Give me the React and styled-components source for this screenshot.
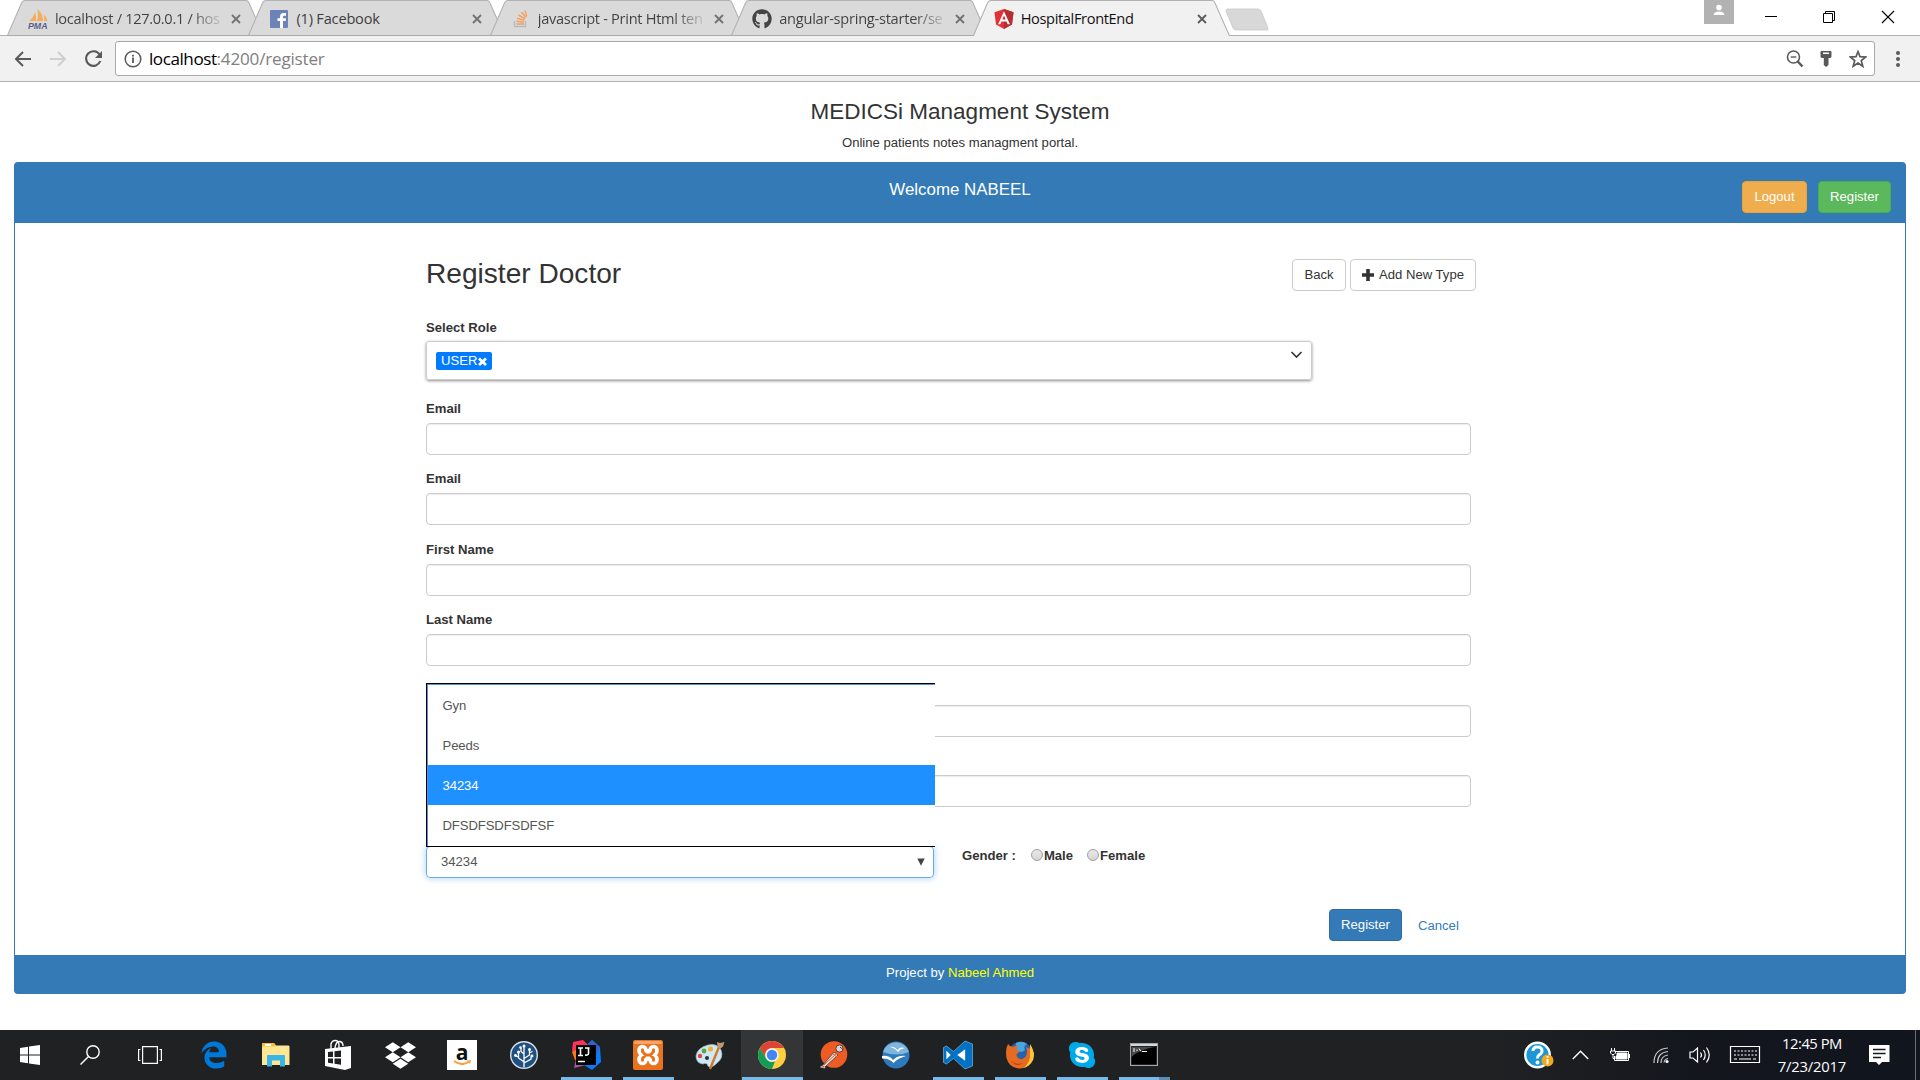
import React from "react";
import styled, { createGlobalStyle, css } from "styled-components";
import { FaGithub, FaDropbox, FaSkype } from "react-icons/fa";

const GlobalStyle = createGlobalStyle`
  * { box-sizing: border-box; }
  html, body { margin: 0; padding: 0; background: #fff; overflow: hidden; }
  body { font-family: "Liberation Sans", Arial, sans-serif; font-size: 13.125px; color: #333; }
`;

const Screen = styled.div`
  width: 1920px;
  height: 1080px;
  display: flex;
  flex-direction: column;
  overflow: hidden;
  background: #fff;
`;

/* ---------- browser chrome ---------- */
const uiFont = css`font-family: "Open Sans", "Noto Sans", sans-serif;`;

const TabStrip = styled.header`
  height: 36px;
  display: flex;
  padding-left: 7px;
  background: linear-gradient(#b1b1b1, #b1b1b1) 0 35px / 100% 1px no-repeat #fff;
  ${uiFont}
`;
const TabBox = styled.div`
  display: grid;
  width: 257px;
  height: 36px;
  flex: none;
  margin-right: -15.6px;
  z-index: ${(p) => (p.$active ? 2 : 1)};
  > * { grid-area: 1 / 1; }
`;
const TabContent = styled.div`
  display: flex;
  align-items: center;
  padding: 2px 20px 0 21px;
  height: 36px;
`;
const Favicon = styled.span`
  width: 20px;
  flex: none;
  display: flex;
  justify-content: center;
  margin-right: 7px;
`;
const TabTitle = styled.span`
  width: 168px;
  flex: none;
  margin: -2px 8px 0 0;
  white-space: nowrap;
  font-size: 14.6px;
  line-height: 20px;
  letter-spacing: ${(p) => p.$spacing || "-0.35px"};
  color: ${(p) => (p.$active ? "#111" : "#404040")};
  ${(p) => p.$fade && css`
    color: transparent;
    background: linear-gradient(90deg, #404040 136px, rgba(64, 64, 64, 0.12) 166px);
    background-clip: text;
    -webkit-background-clip: text;
  `}
`;
const NewTab = styled.svg`
  margin: 8px 0 0 11px;
`;
const WindowControls = styled.div`
  display: flex;
  margin-left: auto;
  padding-right: 25px;
`;
const UserBadge = styled.span`
  width: 30px;
  height: 24px;
  margin-right: 30px;
  background: #b2b2b2;
  display: flex;
  justify-content: center;
`;
const WinGlyph = styled.svg`
  width: 14px;
  height: 14px;
  margin: 10px ${(p) => p.$gap || "0"} 0 0;
`;
const Toolbar = styled.div`
  height: 46px;
  display: flex;
  align-items: center;
  padding: 0 13px 0 14px;
  background: #f1f1f1;
  border-bottom: 1px solid #b2b2b2;
  ${uiFont}
`;
const ToolIcon = styled.svg`
  width: ${(p) => p.$w || 18}px;
  height: 20px;
  flex: none;
  margin-right: ${(p) => p.$gap || 0}px;
`;
const AddressBar = styled.div`
  flex: 1;
  height: 35px;
  border: 1px solid #a9a9a9;
  border-radius: 3px;
  background: #fff;
  display: flex;
  align-items: center;
  padding: 0 7px 0 8px;
  margin-right: 14px;
`;
const Url = styled.span`
  flex: 1;
  font-size: 17.1px;
  line-height: 24px;
  letter-spacing: -0.2px;
  color: #808080;
  b { font-weight: 400; color: #000; letter-spacing: -0.45px; }
`;

/* ---------- page ---------- */
const Page = styled.main`
  flex: 1;
  padding: 18px 14px 0;
  display: flex;
  flex-direction: column;
`;
const SiteTitle = styled.h3`
  margin: 0;
  font-size: 22.5px;
  font-weight: 400;
  line-height: 24px;
  text-align: center;
`;
const Tagline = styled.p`
  margin: 9px 0 10px;
  line-height: 19px;
  text-align: center;
`;
const Panel = styled.section`
  border-radius: 4px;
  overflow: hidden;
`;
const PanelHead = styled.div`
  height: 61px;
  display: grid;
  grid-template-columns: 1fr auto 1fr;
  background: #337ab7;
  color: #fff;
`;
const Welcome = styled.div`
  grid-column: 2;
  padding-top: 18px;
  font-size: 16.9px;
  line-height: 20px;
`;
const HeadActions = styled.div`
  display: flex;
  justify-content: flex-end;
  gap: 11px;
  padding: 19px 15px 0 0;
`;
const tones = {
  warning: ["#f0ad4e", "#eea236", "#fff"],
  success: ["#5cb85c", "#4cae4c", "#fff"],
  primary: ["#337ab7", "#2e6da4", "#fff"],
  plain: ["#fff", "#ccc", "#333"],
};
const Button = styled.button`
  width: ${(p) => p.$w}px;
  height: 32px;
  padding: 0 0 1px;
  display: flex;
  align-items: center;
  justify-content: center;
  gap: 5px;
  flex: none;
  border: 1px solid ${(p) => tones[p.$tone][1]};
  border-radius: 4px;
  background: ${(p) => tones[p.$tone][0]};
  color: ${(p) => tones[p.$tone][2]};
  font: 13.125px "Liberation Sans", Arial, sans-serif;
  white-space: nowrap;
`;
const PanelBody = styled.div`
  height: 732px;
  border: solid #337ab7;
  border-width: 0 1px;
  padding: 34px 0 0 411px;
`;
const Form = styled.form`
  width: 1050px;
`;
const FormHead = styled.div`
  display: flex;
  gap: 4px;
  height: 61px;
  align-items: flex-start;
  button { margin-top: 2px; }
`;
const Heading = styled.h2`
  flex: 1;
  margin: 0;
  font-size: 28.1px;
  font-weight: 400;
  line-height: 33px;
`;
const Label = styled.label`
  display: block;
  height: 19px;
  line-height: 19px;
  font-weight: 700;
`;
const RoleBox = styled.div`
  width: 886px;
  height: 39px;
  margin: 4px 0 19px;
  padding: 10px 8px 0 9px;
  display: flex;
  justify-content: space-between;
  border: 1px solid #ccc;
  border-radius: 3px;
  box-shadow: 0 1px 3px rgba(0, 0, 0, 0.45);
`;
const Tag = styled.span`
  height: 18px;
  width: 56px;
  padding-left: 5px;
  display: flex;
  align-items: center;
  gap: 1px;
  border-radius: 2px;
  background: #007bff;
  color: #fff;
  line-height: 18px;
`;
const Chevron = styled.svg`
  margin-top: -1px;
`;
const Field = styled.div`
  height: 70.4px;
`;
const Input = styled.input`
  display: block;
  width: 1045px;
  height: 32px;
  margin-top: 5px;
  border: 1px solid #ccc;
  border-radius: 4px;
  background: #fff;
  box-shadow: inset 0 1px 1px rgba(0, 0, 0, 0.075);
`;
const LastRow = styled.div`
  display: flex;
  padding-top: 24.6px;
  height: 88px;
`;
const SelectWrap = styled.div`
  position: relative;
  width: 508px;
  height: 32px;
`;
const SelectBox = styled.div`
  height: 32px;
  padding: 0 8px 0 14px;
  display: flex;
  align-items: center;
  justify-content: space-between;
  border: 1px solid #66afe9;
  border-radius: 4px;
  color: #555;
  box-shadow: 0 0 7px rgba(102, 175, 233, 0.6);
`;
const Options = styled.ul`
  position: absolute;
  left: 0;
  top: -163px;
  width: 509px;
  height: 164px;
  margin: 0;
  padding: 1px 0 0 1px;
  list-style: none;
  background: #fff;
  border: solid #000;
  border-width: 1px 0 1px 1px;
  box-shadow: inset 1px 1px 0 #5b8fd6;
`;
const Option = styled.li`
  height: 40px;
  line-height: 41px;
  padding-left: 14.5px;
  letter-spacing: -0.1px;
  color: ${(p) => (p.$selected ? "#fff" : "#555")};
  background: ${(p) => (p.$selected ? "#1e90ff" : "transparent")};
`;
const Gender = styled.div`
  display: flex;
  align-items: center;
  height: 19px;
  margin-left: 28px;
  font-weight: 700;
`;
const Radio = styled.span`
  width: 12px;
  height: 12px;
  margin: 0 1px 0 ${(p) => p.$left}px;
  border: 1px solid #a0a0a0;
  border-radius: 50%;
  background: linear-gradient(#e9e9e9, #d6d6d6);
`;
const Actions = styled.div`
  display: flex;
  padding-left: 903px;
`;
const Cancel = styled.a`
  margin-left: 16px;
  line-height: 33px;
  color: #337ab7;
`;
const Footer = styled.footer`
  height: 39px;
  padding-top: 8px;
  line-height: 19px;
  text-align: center;
  background: #337ab7;
  color: #fff;
  span { color: #ff0; }
`;

/* ---------- taskbar ---------- */
const Taskbar = styled.nav`
  height: 50px;
  flex: none;
  display: flex;
  background: linear-gradient(90deg, #1f2123 0, #202123 1500px, #13161d 1700px, #11151e 100%);
`;
const Slot = styled.div`
  width: ${(p) => p.$w || 62}px;
  height: 50px;
  flex: none;
  display: grid;
  justify-items: center;
  align-items: center;
  grid-template-rows: 47px 3px;
  background: ${(p) => (p.$active ? "#343536" : "transparent")};
  svg { overflow: visible; margin-top: 3px; }
`;
const Running = styled.i`
  align-self: stretch;
  width: ${(p) => (p.$full ? 61 : 51)}px;
  background: ${(p) =>
    p.$multi ? "linear-gradient(90deg, #76b9ed 40px, #5b8cb4 40px)" : "#76b9ed"};
`;
const Tray = styled.div`
  margin-left: auto;
  display: flex;
  align-items: center;
  ${uiFont}
  svg { flex: none; overflow: visible; }
`;
const TrayIcon = styled.svg`
  margin-right: ${(p) => p.$gap}px;
`;
const Clock = styled.div`
  width: 80px;
  margin-right: 17px;
  text-align: center;
  color: #fff;
  font-size: 14.8px;
  line-height: 23px;
  letter-spacing: -0.5px;
`;
const DateLine = styled.div`
  letter-spacing: -0.2px;
`;
const ShowDesktop = styled.span`
  width: 5px;
  height: 50px;
  border-left: 1px solid #6b6e72;
`;

/* ---------- drawings ---------- */
const TabShape = ({ active }) => (
  <svg width="257" height="36" viewBox="0 0 257 36">
    <path
      d="M.5 35.5 14.5 3Q15.8.5 18 .5H239Q241 .5 242 3L256.3 35.5"
      fill={active ? "#f1f1f1" : "#dadada"}
      stroke="#b3b3b3"
      strokeWidth="1.1"
    />
    <path d={active ? "M1.5 35.5H255.5" : "M0 35.5H257"} stroke={active ? "#f1f1f1" : "#aaa"} />
  </svg>
);
const CloseX = ({ color = "#727272" }) => (
  <svg width="10" height="10" viewBox="0 0 10 10">
    <path d="M1 1 9 9M9 1 1 9" stroke={color} strokeWidth="1.8" />
  </svg>
);
const Pma = () => (
  <svg width="20" height="20" viewBox="0 0 20 20">
    <path d="M1 12Q6 8 7 3Q8.500 8 8 12ZM9 12Q11 6 9.500 0Q15 5 15 12ZM16 12Q17 8 15.500 5Q19 8 19.500 12Z" fill="#f6ad5c" />
    <text x="0" y="19.500" fontSize="8.500" fontWeight="700" fontStyle="italic" fontFamily="Liberation Sans, sans-serif" fill="#5b5e8c" textLength="19.500" lengthAdjust="spacingAndGlyphs">PMA</text>
  </svg>
);
const Fb = () => (
  <svg width="18" height="18" viewBox="0 0 18 18">
    <rect width="18" height="18" rx="1" fill="#6c83b8" />
    <path d="M10 18V11H7.500V8.200H10V6.500Q10 3 13.500 3H16V5.800H14.400Q13 5.800 13 7V8.200H16L15.600 11H13V18Z" fill="#fff" />
  </svg>
);
const So = () => (
  <svg width="16" height="18" viewBox="0 0 16 18">
    <path d="M1.500 11V16.500H12.500V11" fill="none" stroke="#b8babc" strokeWidth="1.500" />
    <path d="M3.500 14H11M3.500 11.300 11 12.300M4 8.300 11.300 10.400M5.500 5 12 9M8.500 2 12.800 7.500M12 .5 13.800 6.500" stroke="#f2a263" strokeWidth="1.500" />
  </svg>
);
const AngularIcon = () => (
  <svg width="20" height="20" viewBox="0 0 20 20">
    <path d="M10 0 19.500 3.300 18 15.500 10 20 2 15.500 .5 3.300Z" fill="#e23237" />
    <path d="M10 0 19.500 3.300 18 15.500 10 20Z" fill="#b52e31" />
    <path fillRule="evenodd" d="M10 2.300 15.900 15.300H13.700L12.500 12.400H7.500L6.300 15.300H4.100ZM10 6.500 8.300 10.600H11.700Z" fill="#fff" />
  </svg>
);

const apps = [
  {
    w: 60,
    icon: (
      <svg width="20" height="20" viewBox="0 0 20 20">
        <path d="M0 3 8 1.800V9.500H0ZM9 1.600 20 0V9.500H9ZM0 10.500H8V18.200L0 17ZM9 10.500H20V20L9 18.400Z" fill="#fff" />
      </svg>
    ),
  },
  {
    w: 60,
    icon: (
      <svg width="20" height="20" viewBox="0 0 20 20" fill="none" stroke="#fff" strokeWidth="1.400">
        <circle cx="13" cy="7" r="6.200" /><path d="M8.500 11.500.5 19.500" />
      </svg>
    ),
  },
  {
    w: 60,
    icon: (
      <svg width="24" height="20" viewBox="0 0 24 20" fill="none" stroke="#fff" strokeWidth="1.200">
        <path d="M4.600 1.600H19.400V18.400H4.600ZM2.500 4.500H.6V15.500H2.500M21.500 4.500H23.400V15.500H21.500" />
      </svg>
    ),
  },
  {
    w: 65,
    icon: (
      <svg width="27" height="28" viewBox="-6 0 472 512">
        <path d="M486.286 243.671c0-44.032-7.754-84.465-28.801-122.405C416.498 47.879 343.912 8.001 258.893 8.001 118.962 7.724 40.617 113.214 26.056 227.679c42.429-61.312 117.073-121.376 220.375-124.966 0 0 109.666 0 99.419 104.957H169.997c6.369-37.386 18.554-58.986 34.339-78.926-75.048 34.893-121.85 96.096-120.742 188.315.83 71.448 50.124 144.836 120.743 171.976 83.357 31.847 192.776 7.2 240.132-21.324V363.307c-80.864 56.494-270.871 60.925-272.255-67.572h314.073z" fill="#0078d7" />
      </svg>
    ),
  },
  {
    icon: (
      <svg width="28" height="24" viewBox="0 0 28 24">
        <path d="M0 1Q0 0 1 0H12L14 2.500H26.500Q27.500 2.500 27.500 4V22H0Z" fill="#ffe694" />
        <path d="M0 1Q0 0 1 0H12L14 3.500H0Z" fill="#f2c12e" />
        <path d="M3 1H9V3H3Z" fill="#fff" />
        <path d="M5 23.500V13Q5 12 6 12H22Q23 12 23 13V23.500H18V17.500H10V23.500Z" fill="#3ab5e8" />
      </svg>
    ),
  },
  {
    icon: (
      <svg width="26" height="30" viewBox="0 0 26 30">
        <path d="M6 9V4Q7 .5 10 .5 14 .5 14 5V8M10 8Q11 1 15 1.500 18 2 18 6" fill="none" stroke="#fff" strokeWidth="1.400" />
        <path d="M0 9 26 6V28L20 30 0 26Z" fill="#fff" />
        <path d="M3 12 8 11.500V17H3ZM9.500 11.300 16 10.600V17H9.500ZM3 18.500H8V23.500L3 22.800ZM9.500 18.500H16V24.700L9.500 23.800Z" fill="#202123" />
      </svg>
    ),
  },
  { icon: <FaDropbox size={31} color="#fff" /> },
  {
    icon: (
      <svg width="30" height="30" viewBox="0 0 30 30">
        <rect width="30" height="30" fill="#fff" />
        <text x="15" y="20" textAnchor="middle" fontSize="21" fontWeight="700" fontFamily="Open Sans, sans-serif" fill="#111">a</text>
        <path d="M7 21Q15 27 22 21.500" fill="none" stroke="#f7a13d" strokeWidth="2" />
        <path d="M20 20.500 24 20 22.800 24Z" fill="#f7a13d" />
      </svg>
    ),
  },
  {
    icon: (
      <svg width="28" height="28" viewBox="0 0 28 28">
        <circle cx="14" cy="14" r="13.300" fill="#205081" stroke="#d8e2ec" strokeWidth="1.400" />
        <path d="M14 26V5M14 21 8.500 17V12M14 17.500 19.500 14V9M14 13 11 10.500V7M9 16.500 5.500 14.500M14 22 21 18V15.500M19 12 22.500 10.500" fill="none" stroke="#fff" strokeWidth="1.300" />
        <g fill="#fff">
          <circle cx="14" cy="5" r="1.500" /><circle cx="8.500" cy="11" r="1.500" /><circle cx="19.500" cy="8.500" r="1.500" />
          <circle cx="10.500" cy="6.500" r="1.300" /><circle cx="5.500" cy="14.500" r="1.400" /><circle cx="22" cy="15" r="1.400" />
        </g>
      </svg>
    ),
  },
  {
    run: true,
    icon: (
      <svg width="30" height="30" viewBox="0 0 30 30">
        <path d="M2 2 12 0 17 5 10 18 1 11Z" fill="#fe315d" />
        <path d="M1 12 7 9 9 22 4 20Z" fill="#f97a12" />
        <path d="M3 28 5 19 19 24 11 26Z" fill="#a55a9c" />
        <path d="M16 5 21 0 29 7 30 22 21 30 13 25Z" fill="#087cfa" />
        <path d="M16 5 21 0 29 7 25 16Z" fill="#2f62d0" />
        <rect x="5" y="5" width="20" height="20" fill="#000" />
        <path d="M7 8H12M9.500 8V15.500M7 15.500H12M14 8H18.500M17.500 8V13.500Q17.500 15.500 14 15M7 21.500H14" fill="none" stroke="#fff" strokeWidth="1.600" />
      </svg>
    ),
  },
  {
    run: true,
    icon: (
      <svg width="30" height="30" viewBox="0 0 30 30">
        <rect width="30" height="30" rx="2" fill="#e9721f" />
        <path d="M1 3Q1 1 3 1H27Q29 1 29 3V4H1Z" fill="#f7a36a" />
        <g fill="none" strokeLinecap="round" strokeLinejoin="round">
          <path d="M9.500 10V11L13 15 9.500 19V20M20.500 10V11L17 15 20.500 19V20M13 15H17" stroke="#fff" strokeWidth="10.500" />
          <path d="M9.500 9.800V11.500L12.500 15 9.500 18.500V20.200M20.500 9.800V11.500L17.500 15 20.500 18.500V20.200M12.500 15H17.500" stroke="#e9721f" strokeWidth="3" />
        </g>
      </svg>
    ),
  },
  {
    icon: (
      <svg width="30" height="28" viewBox="0 0 30 28">
        <path d="M13 4Q22 2 26 9 29 17 22 22 16 28 13 25 12 21 8 23 1 22 1 15 2 7 13 4Z" fill="#cfe6f3" stroke="#9dbdd2" strokeWidth=".7" />
        <circle cx="5" cy="15" r="2.200" fill="#d84a3e" /><circle cx="9" cy="10" r="2.400" fill="#58a83f" />
        <circle cx="15.500" cy="8" r="2.500" fill="#f0b429" /><circle cx="12" cy="17" r="2" fill="#26313a" />
        <path d="M15 28 24 6" stroke="#cf7a2c" strokeWidth="2.400" />
        <path d="M22.500 6 22 1 25 2 29.500 1 28 5.500 25 8Z" fill="#b99a72" />
      </svg>
    ),
  },
  {
    run: true,
    active: true,
    icon: (
      <svg width="28" height="28" viewBox="0 0 28 28">
        <circle cx="14" cy="14" r="14" fill="#ffcd40" />
        <path d="M1.900 7A14 14 0 0 1 26.100 7H14A7 7 0 0 0 8 17.500Z" fill="#db4437" />
        <path d="M1.900 7 8 17.500A7 7 0 0 0 17 20.300L14 28A14 14 0 0 1 1.900 7Z" fill="#0f9d58" />
        <circle cx="14" cy="14" r="6.700" fill="#f3f3f3" />
        <circle cx="14" cy="14" r="5.200" fill="#4285f4" />
      </svg>
    ),
  },
  {
    icon: (
      <svg width="28" height="28" viewBox="0 0 28 28">
        <circle cx="14" cy="13.500" r="13.300" fill="#ef5b25" />
        <path d="M3 24 14 11 18 14 5 26Z" fill="#e8ded8" stroke="#3a3a3a" strokeWidth=".8" />
        <path d="M4 24 17 12M13 13 17 16" stroke="#ef5b25" strokeWidth="1" />
        <circle cx="19.500" cy="7.500" r="3.600" fill="#ded5cf" stroke="#3a3a3a" strokeWidth=".9" />
        <path d="M20 6 23 8.500" stroke="#3a3a3a" />
        <path d="M.5 26 4 24 5 27Z" fill="#ef5b25" stroke="#ddd" strokeWidth=".7" />
      </svg>
    ),
  },
  {
    icon: (
      <svg width="28" height="28" viewBox="0 0 28 28">
        <circle cx="14" cy="14" r="13.500" fill="#2d7abd" />
        <path d="M1 11A13.500 13.500 0 0 1 27 11Q15 16 1 11Z" fill="#7eb6df" />
        <path d="M8 6Q12 5 15.500 9 18 5.500 23 7 18 8 16 11 13 7 8 6ZM0 15Q7 14 11 19 16 14 24 15 16 17 11.500 22 7 17 0 17.500Z" fill="#fff" />
      </svg>
    ),
  },
  {
    run: true,
    icon: (
      <svg width="30" height="28" viewBox="0 0 30 28">
        <path fillRule="evenodd" d="M22 0 29.500 3V25L22 28 10.500 17.500 3.500 23 .5 21.500V6.500L3.500 5 10.500 10.500ZM22 8.500 14.500 14 22 19.500ZM3.500 10V18L7.500 14Z" fill="#0072c6" stroke="#8fc4e8" strokeWidth=".6" />
        <path d="M22 8.500 14.500 14 22 19.500ZM3.500 10V18L7.500 14Z" fill="#fff" />
      </svg>
    ),
  },
  {
    run: true,
    icon: (
      <svg width="28" height="28" viewBox="0 0 28 28">
        <circle cx="14.500" cy="12.500" r="11.800" fill="#2463ac" />
        <path d="M10 2Q16-1 21 3 17 5 19 9 15 13 10 9Z" fill="#49a5dc" />
        <path d="M2 3Q4 6 7 6 10 4 12 5 10 7 11 9 15 10 12 12 9 13 12 17 17 20 20 15 22 10 20 6 26 10 24 3 29 12 27 19 22 28 13 27.500 3 27 .5 17 -1 8 2 3Z" fill="#e66a1f" />
        <path d="M24 3Q30 12 27 19 24 25 18 27 25 20 24 12Z" fill="#fbc63a" />
        <path d="M3 17Q8 25 17 22 10 28 3 17Z" fill="#c93a1f" />
      </svg>
    ),
  },
  {
    run: true,
    icon: (
      <svg width="28" height="28" viewBox="0 0 28 28">
        <circle cx="14" cy="14" r="9" fill="#fff" />
        <FaSkype x="-1" y="-1" size={30} color="#00a9e8" />
      </svg>
    ),
  },
  {
    run: true,
    multi: true,
    icon: (
      <svg width="28" height="24" viewBox="0 0 28 24">
        <rect x=".6" y=".6" width="26.800" height="21.800" fill="#000" stroke="#a2a6aa" strokeWidth="1.200" />
        <path d="M1 1H27V3H1Z" fill="#d4d7da" />
        <path d="M1.500 3.500H26.500Q8 7 1.500 14Z" fill="#4a4a4a" />
        <path d="M3 6H5M3 8H5M7 6.500V8M9 5.500 11 8.500M12 8.500H17" stroke="#fff" />
      </svg>
    ),
  },
];

const tabs = [
  { icon: <Pma />, title: "localhost / 127.0.0.1 / hos", fade: true, spacing: "-0.32px" },
  { icon: <Fb />, title: "(1) Facebook", spacing: "-0.2px" },
  { icon: <So />, title: "javascript - Print Html ten", fade: true, spacing: "-0.3px" },
  { icon: <FaGithub size={20} color="#444" />, title: "angular-spring-starter/se", fade: true, spacing: "-0.25px" },
  { icon: <AngularIcon />, title: "HospitalFrontEnd", active: true },
];

const fields = ["Email", "Email", "First Name", "Last Name", "", ""];
const options = ["Gyn", "Peeds", "34234", "DFSDFSDFSDFSF"];

function Browser() {
  return (
    <>
      <TabStrip>
        {tabs.map((t) => (
          <TabBox key={t.title} $active={t.active}>
            <TabShape active={t.active} />
            <TabContent>
              <Favicon>{t.icon}</Favicon>
              <TabTitle $active={t.active} $fade={t.fade} $spacing={t.spacing}>{t.title}</TabTitle>
              <CloseX color={t.active ? "#5a5a5a" : undefined} />
            </TabContent>
          </TabBox>
        ))}
        <NewTab width="44" height="23" viewBox="0 0 44 23">
          <path d="M2.500 1H33Q35 1 36 3L43 20Q43.500 22 42 22H11Q9 22 8 20L1 3Q.5 1 2.500 1Z" fill="#d8d8d8" stroke="#c8c8c8" strokeWidth=".8" />
        </NewTab>
        <WindowControls>
          <UserBadge>
            <svg width="12" height="20" viewBox="0 0 12 20" fill="#fff">
              <circle cx="6" cy="7.500" r="2.800" /><path d="M.5 15Q1 11.500 6 11.500T11.500 15Z" />
            </svg>
          </UserBadge>
          <WinGlyph $gap="44px" viewBox="0 0 14 14"><path d="M1 6.500H13" stroke="#000" /></WinGlyph>
          <WinGlyph $gap="45px" viewBox="0 0 14 14">
            <path d="M1.500 3.500H10.500V12.500H1.500ZM3.500 3.500V1.500H12.500V10.500H10.500" fill="none" stroke="#000" />
          </WinGlyph>
          <WinGlyph viewBox="0 0 14 14"><path d="M1 1 13 13M13 1 1 13" stroke="#000" strokeWidth="1.100" /></WinGlyph>
        </WindowControls>
      </TabStrip>
      <Toolbar>
        <ToolIcon $gap={17} viewBox="0 0 18 20"><path d="M17 10H2M9 3 2 10 9 17" fill="none" stroke="#5a5a5a" strokeWidth="2" /></ToolIcon>
        <ToolIcon $gap={17} viewBox="0 0 18 20"><path d="M1 10H16M9 3 16 10 9 17" fill="none" stroke="#cfcfcf" strokeWidth="2" /></ToolIcon>
        <ToolIcon $w={19} $gap={12} viewBox="0 0 19 20">
          <path d="M15.500 5.500A7.300 7.300 0 1 0 16.300 12" fill="none" stroke="#5a5a5a" strokeWidth="2.100" />
          <path d="M18 2V9H11Z" fill="#5a5a5a" />
        </ToolIcon>
        <AddressBar>
          <ToolIcon $gap={7} viewBox="0 0 18 20">
            <circle cx="9" cy="10" r="7.800" fill="none" stroke="#5a5a5a" strokeWidth="1.500" />
            <path d="M9 8.500V14M9 5.700V7.400" stroke="#5a5a5a" strokeWidth="1.800" />
          </ToolIcon>
          <Url><b>localhost</b>:4200/register</Url>
          <ToolIcon $gap={16} viewBox="0 0 18 20" fill="none" stroke="#5a5a5a">
            <circle cx="7.500" cy="8" r="6" strokeWidth="1.600" /><path d="M4.700 8H10.300" strokeWidth="1.400" />
            <path d="M11.800 12.500 16.500 17.500" strokeWidth="2.500" />
          </ToolIcon>
          <ToolIcon $w={12} $gap={17} viewBox="0 0 12 20">
            <path fillRule="evenodd" d="M1.500 2H10.500Q11.500 2 11.500 3V7.500Q11.500 9 9.500 9H8.500V16L6 18 3.800 16V9H2.500Q.5 9 .5 7.500V3Q.5 2 1.500 2ZM3 3.500V5H9V3.500Z" fill="#5a5a5a" />
          </ToolIcon>
          <ToolIcon viewBox="0 0 18 20">
            <path d="M9 2.500 11 7.700 16.700 8 12.300 11.600 13.800 17.200 9 14 4.200 17.200 5.700 11.600 1.300 8 7 7.700Z" fill="none" stroke="#5a5a5a" strokeWidth="1.700" />
          </ToolIcon>
        </AddressBar>
        <ToolIcon viewBox="0 0 18 20" fill="#5a5a5a">
          <circle cx="9" cy="4" r="2" /><circle cx="9" cy="10" r="2" /><circle cx="9" cy="16" r="2" />
        </ToolIcon>
      </Toolbar>
    </>
  );
}

function RegisterForm() {
  return (
    <Form>
      <FormHead>
        <Heading>Register Doctor</Heading>
        <Button type="button" $w={54} $tone="plain">Back</Button>
        <Button type="button" $w={126} $tone="plain">
          <svg width="12" height="12" viewBox="0 0 12 12"><path d="M6 0V12M0 6H12" stroke="#333" strokeWidth="3.600" /></svg>
          Add New Type
        </Button>
      </FormHead>
      <Label>Select Role</Label>
      <RoleBox>
        <Tag>
          USER
          <svg width="9" height="9" viewBox="0 0 9 9"><path d="M1 1.500 8 8M8 1.500 1 8" stroke="#fff" strokeWidth="2.800" /></svg>
        </Tag>
        <Chevron width="13" height="8" viewBox="0 0 13 8"><path d="M1.500 1 6.500 6 11.500 1" fill="none" stroke="#333" strokeWidth="1.600" /></Chevron>
      </RoleBox>
      {fields.map((name, i) => (
        <Field key={i}>
          <Label>{name}</Label>
          <Input />
        </Field>
      ))}
      <LastRow>
        <SelectWrap>
          <SelectBox>
            34234
            <svg width="8" height="8" viewBox="0 0 8 8"><path d="M.3.500H7.700L4 7.800Z" fill="#444" /></svg>
          </SelectBox>
          <Options>
            {options.map((o) => <Option key={o} $selected={o === "34234"}>{o}</Option>)}
          </Options>
        </SelectWrap>
        <Gender>
          Gender :
          <Radio $left={15} />Male
          <Radio $left={14} />Female
        </Gender>
      </LastRow>
      <Actions>
        <Button type="button" $w={73} $tone="primary">Register</Button>
        <Cancel>Cancel</Cancel>
      </Actions>
    </Form>
  );
}

function SystemTray() {
  return (
    <Tray>
      <TrayIcon $gap={18} width="30" height="28" viewBox="0 0 30 28">
        <circle cx="13.500" cy="14" r="12.300" fill="#1b96d8" stroke="#fff" strokeWidth="2.400" />
        <path d="M9 10Q9 6 13.500 6T18 10Q18 12.500 15 14 13.500 15 13.500 17.500" fill="none" stroke="#fff" strokeWidth="3" />
        <circle cx="13.500" cy="21.500" r="2" fill="#fff" />
        <circle cx="23.500" cy="19.500" r="6" fill="#f2a81d" />
        <path d="M23.500 18V23.500M23.500 15V16.800" stroke="#fff" strokeWidth="1.800" />
      </TrayIcon>
      <TrayIcon $gap={21} width="17" height="10" viewBox="0 0 17 10"><path d="M.8 9 8.500 1.300 16.200 9" fill="none" stroke="#fff" strokeWidth="1.400" /></TrayIcon>
      <TrayIcon $gap={23} width="20" height="14" viewBox="0 0 20 14" stroke="#fff" fill="none">
        <path d="M6 3.500H18.500V12.500H4.500V8M19.500 6V10" /><path d="M7 5H17V11H6V8H7Z" fill="#fff" />
        <path d="M1.500 0V3M4.500 0V3M.5 3H5.500V5L4 6.500H2L.5 5ZM3 6.500V10.500H5" />
      </TrayIcon>
      <TrayIcon $gap={19} width="17" height="16" viewBox="0 0 17 16" fill="none" stroke="#fff" strokeWidth="1.200">
        <path d="M1 16Q1 2 15 1M4.500 16Q4.500 5.500 15 4.500M8 16Q8 9 15 8M11 15.500Q11.500 12 15 11.500" opacity=".75" />
        <circle cx="14" cy="14.500" r="1.600" fill="#fff" stroke="none" />
      </TrayIcon>
      <TrayIcon $gap={19} width="22" height="18" viewBox="0 0 22 18" fill="none" stroke="#fff" strokeWidth="1.200">
        <path d="M1 6H4L8.500 2V16L4 12H1ZM11.500 6.500Q13.500 9 11.500 11.500M14.500 4Q18 9 14.500 14M17.500 1.500Q23 9 17.500 16.500" />
      </TrayIcon>
      <TrayIcon $gap={12} width="30" height="18" viewBox="0 0 30 18" fill="none" stroke="#fff">
        <path d="M.5.500H29.500V16.500H.5Z" strokeWidth="1.200" />
        <path d="M4 5H27M4 9H27" strokeDasharray="2 1.500" strokeWidth="1.200" />
        <path d="M4 13H7M9 13H21M23 13H26" strokeWidth="1.200" />
      </TrayIcon>
      <Clock><div>12:45 PM</div><DateLine>7/23/2017</DateLine></Clock>
      <TrayIcon $gap={25} width="21" height="22" viewBox="0 0 21 22">
        <path d="M0 1H20.500V18H13L10 21 7 18H0Z" fill="#fff" /><path d="M4 5.500H16.500M4 9.500H16.500M4 13.500H12" stroke="#16191f" strokeWidth="1.300" />
      </TrayIcon>
      <ShowDesktop />
    </Tray>
  );
}

export default function App() {
  return (
    <Screen>
      <GlobalStyle />
      <Browser />
      <Page>
        <SiteTitle>MEDICSi Managment System</SiteTitle>
        <Tagline>Online patients notes managment portal.</Tagline>
        <Panel>
          <PanelHead>
            <Welcome>Welcome NABEEL</Welcome>
            <HeadActions>
              <Button $w={65} $tone="warning">Logout</Button>
              <Button $w={73} $tone="success">Register</Button>
            </HeadActions>
          </PanelHead>
          <PanelBody><RegisterForm /></PanelBody>
          <Footer>Project by <span>Nabeel Ahmed</span></Footer>
        </Panel>
      </Page>
      <Taskbar>
        {apps.map((a, i) => (
          <Slot key={i} $w={a.w} $active={a.active}>
            {a.icon}
            {a.run && <Running $full={a.active} $multi={a.multi} />}
          </Slot>
        ))}
        <SystemTray />
      </Taskbar>
    </Screen>
  );
}
